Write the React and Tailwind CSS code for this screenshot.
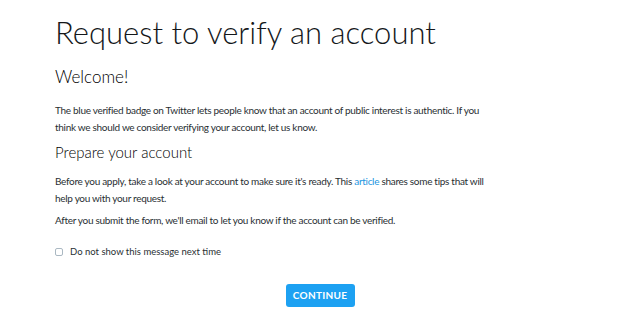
import React, { useState } from 'react';

const App = () => {
  const [hide, setHide] = useState(false);

  return (
    <div className="min-h-screen bg-white font-['Lato',sans-serif]">
      <div className="ml-[55px] w-[530px] pt-[14px] text-[#14171a]">
        <h1 className="text-[31px] font-light leading-[36px]">Request to verify an account</h1>

        <h2 className="mt-[17px] text-[17px] font-light leading-[20px] text-[#000]">Welcome!</h2>
        <p className="mt-[15px] w-[430px] text-[10px] leading-[17px] tracking-[-0.3px] text-[#292f33]">
          The blue verified badge on Twitter lets people know that an account of public interest is authentic. If you think we should we consider verifying your account, let us know.
        </p>

        <h2 className="mt-[6px] text-[15px] font-light leading-[20px] text-[#000]">Prepare your account</h2>
        <p className="mt-[11px] w-[430px] text-[10px] leading-[17px] tracking-[-0.3px] text-[#292f33]">
          Before you apply, take a look at your account to make sure it's ready. This{' '}
          <a href="#" className="text-[#1b95e0]">article</a> shares some tips that will help you with your request.
        </p>
        <p className="mt-[5px] text-[10px] leading-[17px] tracking-[-0.3px] text-[#292f33]">
          After you submit the form, we'll email to let you know if the account can be verified.
        </p>

        <label className="mt-[17px] flex h-[12px] items-center gap-[7px] text-[9.5px] text-[#292f33]">
          <input
            type="checkbox"
            checked={hide}
            onChange={(e) => setHide(e.target.checked)}
            className="h-[8px] w-[8px] appearance-none rounded-[2px] border border-[#aab8c2] bg-white checked:bg-[#1da1f2]"
          />
          Do not show this message next time
        </label>

        <div className="mt-[26px] flex justify-center">
          <button className="h-[23px] w-[69px] rounded-[3px] bg-[#1da1f2] text-[10px] font-bold tracking-[0.3px] text-white">
            CONTINUE
          </button>
        </div>
      </div>
    </div>
  );
};

export default App;
